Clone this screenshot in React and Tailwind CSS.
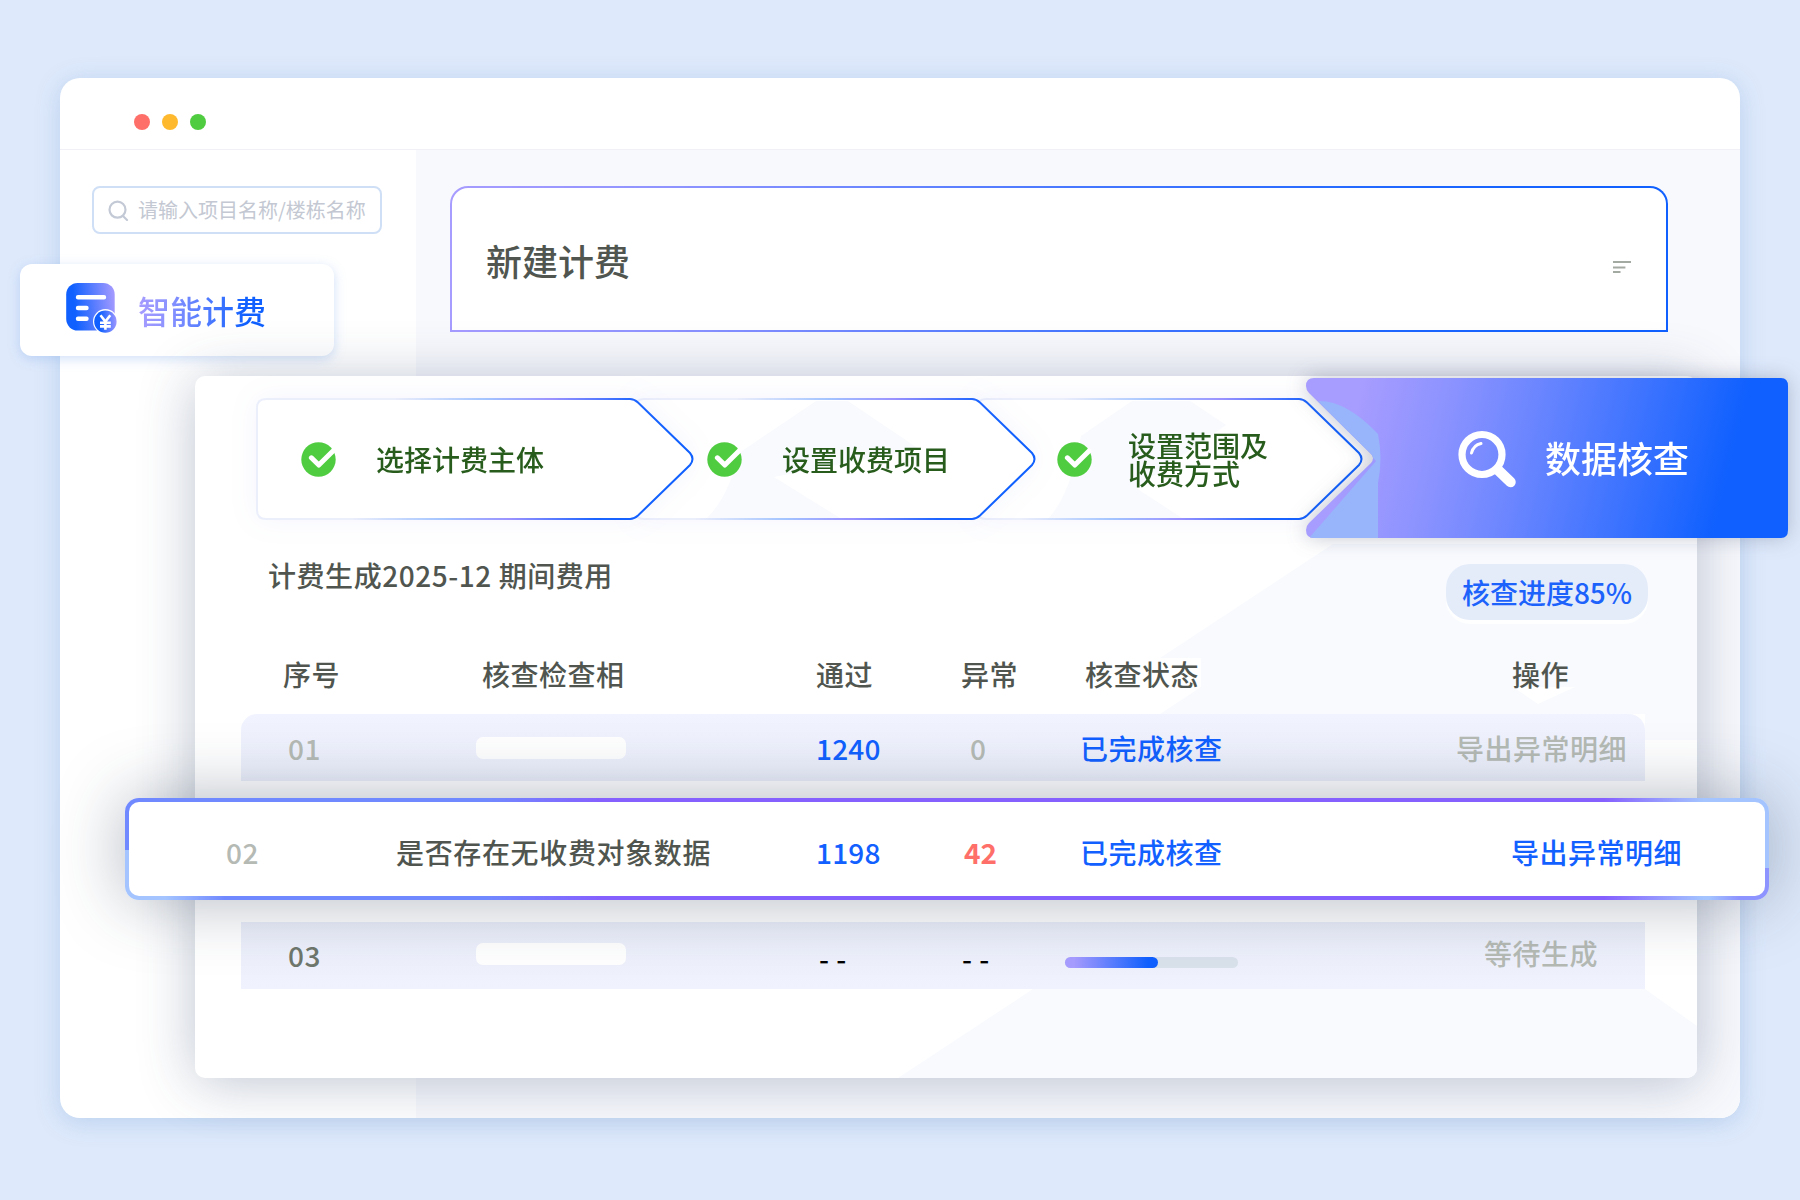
import React from "react";

function Dot({ className }) {
  return <span className={`h-4 w-4 rounded-full ${className}`} />;
}

function CheckBadge() {
  return (
    <svg className="h-[35px] w-[35px] shrink-0" viewBox="0 0 35 35" fill="none">
      <circle cx="17.5" cy="17.5" r="17.2" fill="#50cc41" />
      <path d="M10.4 15.8 17.8 23 32 9" stroke="#fff" strokeWidth="5" strokeLinecap="round" strokeLinejoin="round" />
    </svg>
  );
}

function StepShape({ width, id }) {
  const r = width - 61;
  const d = `M10 1 H${r - 4} Q${r} 1 ${r + 4} 4.5 L${width - 5} 55 Q${width} 61 ${width - 5} 67 L${r + 4} 117.5 Q${r} 121 ${r - 4} 121 H10 Q1 121 1 112 V10 Q1 1 10 1 Z`;
  return (
    <svg className="col-start-1 row-start-1" width={width} height="122" viewBox={`0 0 ${width} 122`} fill="none">
      <defs>
        <linearGradient id={id} gradientUnits="userSpaceOnUse" x1={width - 300} y1="0" x2={width - 30} y2="95">
          <stop offset="0" stopColor="#ebeefb" />
          <stop offset="0.3" stopColor="#a3c4ff" />
          <stop offset="0.52" stopColor="#9a92ff" />
          <stop offset="0.8" stopColor="#1c64ff" />
          <stop offset="1" stopColor="#0f60ff" />
        </linearGradient>
      </defs>
      <path d={d} fill="#fff" stroke={`url(#${id})`} strokeWidth="2" />
    </svg>
  );
}

function Step({ width, id, className, children, tint }) {
  return (
    <div className={`grid h-[122px] shrink-0 drop-shadow-[0_0_14px_rgba(60,90,220,0.06)] ${className}`}>
      <StepShape width={width} id={id} />
      {tint && (
        <svg className="col-start-1 row-start-1" width={width} height="122" viewBox={`0 0 ${width} 122`}>
          <path d={tint} fill="#f9fafe" />
        </svg>
      )}
      <div className="col-start-1 row-start-1 flex items-center">{children}</div>
    </div>
  );
}

function BillIcon() {
  return (
    <svg className="h-[52px] w-[52px]" viewBox="0 0 52 52" fill="none">
      <defs>
        <linearGradient id="bill" x1="0" y1="0.4" x2="1" y2="0.3">
          <stop offset="0.15" stopColor="#0f60ff" />
          <stop offset="1" stopColor="#a49aff" />
        </linearGradient>
        <linearGradient id="coin" x1="0" y1="0" x2="1" y2="0">
          <stop offset="0.25" stopColor="#0f60ff" />
          <stop offset="1" stopColor="#9c96ff" />
        </linearGradient>
      </defs>
      <rect x="0.2" y="0" width="48.5" height="47.5" rx="11.5" fill="url(#bill)" />
      <path d="M12 14.2H38M12 25H20.5M12 35.8H20.5" stroke="#fff" strokeWidth="4.4" strokeLinecap="round" />
      <circle cx="39.4" cy="38.4" r="12.4" fill="#fff" />
      <circle cx="39.4" cy="38.6" r="11.2" fill="url(#coin)" />
      <path d="M34.5 32.3 39.4 38.6 44.3 32.3M39.4 38.6V46.8M34 39.8H44.8M34 43.4H44.8" stroke="#fff" strokeWidth="2.6" />
    </svg>
  );
}

function Window() {
  return (
    <div className="col-start-1 row-start-1 ml-[60px] mt-[78px] flex h-[1040px] w-[1680px] flex-col overflow-hidden rounded-[20px] bg-white shadow-[0_4px_24px_rgba(110,160,215,0.32)]">
      <div className="flex h-[72px] shrink-0 items-center gap-3 border-b border-[#f0f0f6] pl-[74px] pt-[17px]">
        <Dot className="bg-[#ff6f69]" />
        <Dot className="bg-[#ffb92f]" />
        <Dot className="bg-[#50cc41]" />
      </div>
      <div className="flex flex-1">
        <div className="w-[356px] shrink-0 pl-8 pt-9">
          <div className="flex h-12 w-[290px] items-center rounded-lg border-2 border-[#cfdff5] pl-[14px]">
            <svg className="h-[21px] w-[21px] shrink-0" viewBox="0 0 21 21" fill="none" stroke="#c3cad6" strokeWidth="2.2" strokeLinecap="round">
              <circle cx="9.5" cy="9.7" r="8" />
              <path d="M15 16 19 20" />
            </svg>
            <span className="ml-[9px] whitespace-nowrap text-[20px] leading-none text-[#c3c8d2]">请输入项目名称/楼栋名称</span>
          </div>
        </div>
        <div className="flex-1 bg-[#f8f9fd] pl-[34px] pt-9">
          <div className="flex h-[146px] w-[1218px] items-center justify-between rounded-t-[18px] border-2 border-transparent pl-[34px] pr-[35px] [background:linear-gradient(#fff,#fff)_padding-box,linear-gradient(92deg,#a79cff_0%,#8f94ff_18%,#4577ff_52%,#1c66ff_80%,#0f60ff_100%)_border-box]">
            <span className="pt-0.5 text-[36px] font-medium leading-none text-[#50564f]">新建计费</span>
            <svg className="mt-4 h-[14px] w-[18px]" viewBox="0 0 18 14" stroke="#a3aaa2" strokeWidth="2">
              <path d="M0 2H18M0 7.6H12.4M0 12H7.5" />
            </svg>
          </div>
        </div>
      </div>
    </div>
  );
}

function NavCard() {
  return (
    <div className="col-start-1 row-start-1 ml-5 mt-[264px] flex h-[92px] w-[314px] rounded-[12px] bg-white pl-[46px] shadow-[0_3px_12px_rgba(120,165,235,0.35)]">
      <div className="mt-[19px]">
        <BillIcon />
      </div>
      <span className="ml-5 h-[92px] bg-[linear-gradient(90deg,#a79cff_0%,#8d93ff_22%,#2f6eff_70%,#0f60ff_85%)] bg-clip-text text-[32px] font-medium leading-[92px] text-transparent">智能计费</span>
    </div>
  );
}

function Placeholder() {
  return <span className="h-[22px] w-[150px] rounded-[7px] bg-white" />;
}

function Panel() {
  return (
    <div className="z-10 col-start-1 row-start-1 ml-[195px] mt-[376px] grid h-[702px] w-[1502px] rounded-[10px] bg-white shadow-[0_4px_56px_rgba(50,70,110,0.32)]">
      <svg className="col-start-1 row-start-1 rounded-[10px]" width="1502" height="702" viewBox="0 0 1502 702" fill="#f8fafe">
        <path d="M1138 168 1502 168V364H1450V338H965L1006 311V282H965Z" />
        <path d="M703 702 838 613H1450L1502 650V702Z" />
        <path d="M1318 311H1380L1343 328Z" fill="#fff" />
      </svg>
      <div className="col-start-1 row-start-1 flex w-[1502px] flex-col">
        <div className="flex pl-[61px] pt-[22px]">
          <Step width={439} id="s1" className="z-30 w-[439px]">
            <div className="flex items-center pl-[45px]">
              <CheckBadge />
              <span className="-mt-px ml-[40px] text-[28px] font-medium leading-7 text-[#275c1c]">选择计费主体</span>
            </div>
          </Step>
          <Step width={403} id="s2" className="z-20 -ml-[61px] w-[403px]" tint="M73 120Q95 98 105 55L182 3H214L285 51L140 79L206 120Z">
            <div className="flex items-center pl-[73px]">
              <CheckBadge />
              <span className="-mt-px ml-[40px] text-[28px] font-medium leading-7 text-[#275c1c]">设置收费项目</span>
            </div>
          </Step>
          <Step width={388} id="s3" className="z-10 -ml-[61px] w-[388px]" tint="M73 120Q95 95 105 38L156 3H214L250 27L160 90L206 120Z">
            <div className="flex items-center pl-[81px]">
              <CheckBadge />
              <span className="-mt-px ml-[36px] text-[28px] font-medium leading-7 text-[#275c1c]">
                设置范围及
                <br />
                收费方式
              </span>
            </div>
          </Step>
        </div>
        <div className="mt-11 flex h-[56px] items-start justify-between pl-[73px] pr-[49px]">
          <span className="-mt-[3px] text-[28px] font-medium leading-7 tracking-[0.55px] text-[#50564f]">计费生成2025-12 期间费用</span>
          <span className="flex h-14 w-[202px] items-center justify-center rounded-[24px] bg-[#e4ecfa] text-[28px] font-medium leading-none text-[#1c62fb] shadow-[0_4px_1px_#fff]">核查进度85%</span>
        </div>
        <div className="ml-[46px] flex w-[1404px] flex-col text-[28px] font-medium leading-7 tracking-[0.5px] text-[#50564f]">
          <div className="mt-[40px] grid h-7 grid-cols-[199px_334px_145px_124px_427px_auto] pl-[42px]">
            <span>序号</span>
            <span>核查检查相</span>
            <span>通过</span>
            <span>异常</span>
            <span>核查状态</span>
            <span>操作</span>
          </div>
          <div className="mt-[26px] grid h-[67px] grid-cols-[188px_340px_154px_110px_376px_auto] items-center rounded-t-[16px] bg-[linear-gradient(#f1f4fe,#eceffb)] pl-[47px] pt-px">
            <span className="text-[#b5bab4]">01</span>
            <span className="flex">
              <Placeholder />
            </span>
            <span className="tracking-[0.2px] text-[#1160ff]">1240</span>
            <span className="text-[#b5bab4]">0</span>
            <span className="text-[#1160ff]">已完成核查</span>
            <span className="text-[#b5bab4]">导出异常明细</span>
          </div>
          <div className="z-20 -ml-[116px] mt-[17px] grid h-[102px] w-[1644px] grid-cols-[170px_420px_148px_116px_431px_auto] items-center rounded-[14px] border-4 border-transparent pl-[97px] pt-[5px] shadow-[0_0_68px_rgba(40,55,80,0.36)] [background:linear-gradient(#fff,#fff)_padding-box,linear-gradient(90deg,#a3c4ff_40%,transparent)_0_100%/100px_50px_no-repeat_border-box,linear-gradient(270deg,#8d93ff_50%,transparent)_100%_100%/60px_32px_no-repeat_border-box,linear-gradient(90deg,#7189ff_0%,#7189ff_22%,#8560ff_29%,#8560ff_90%,#a3c4ff_96%)_border-box]">
            <span className="text-[#b5bab4]">02</span>
            <span className="tracking-[0.65px]">是否存在无收费对象数据</span>
            <span className="tracking-[0.2px] text-[#1160ff]">1198</span>
            <span className="font-bold tracking-normal text-[#ff6f69]">42</span>
            <span className="text-[#1160ff]">已完成核查</span>
            <span className="text-[#1160ff]">导出异常明细</span>
          </div>
          <div className="mt-[22px] grid h-[67px] grid-cols-[188px_343px_143px_103px_419px_auto] items-center bg-[linear-gradient(#ebeefa,#f0f3fd)] pl-[47px]">
            <span className="-mt-px text-[#6f776c]">03</span>
            <span className="flex pb-[3px]">
              <Placeholder />
            </span>
            <span className="pt-1 text-black">- -</span>
            <span className="pt-1 text-black">- -</span>
            <span className="mt-[13px] flex h-[11px] w-[173px] rounded-full bg-[#d9e1eb]">
              <span className="h-full w-[93px] rounded-full bg-[linear-gradient(90deg,#a79cff_10%,#0f60ff_90%)]" />
            </span>
            <span className="pb-[5px] text-[#b5bab4]">等待生成</span>
          </div>
        </div>
      </div>
    </div>
  );
}

function ReviewRibbon() {
  return (
    <div className="z-20 col-start-1 row-start-1 ml-[1306px] mt-[378px] grid h-40 w-[482px] drop-shadow-[0_0_10px_rgba(60,70,100,0.3)]">
      <svg className="col-start-1 row-start-1" width="482" height="160" viewBox="0 0 482 160">
        <defs>
          <linearGradient id="ribbon" x1="0" y1="0" x2="1" y2="0.08">
            <stop offset="0.12" stopColor="#a79cff" />
            <stop offset="0.3" stopColor="#8c93ff" />
            <stop offset="0.48" stopColor="#6c86ff" />
            <stop offset="0.72" stopColor="#3a72ff" />
            <stop offset="0.92" stopColor="#0f60ff" />
          </linearGradient>
          <clipPath id="ribbonClip">
            <path d="M8 0H475Q482 0 482 8V152Q482 160 475 160H8Q0 160 0 152Q0 148 3 145L65 85Q69 80 65 76L3 15Q0 12 0 8Q0 0 8 0Z" />
          </clipPath>
        </defs>
        <g clipPath="url(#ribbonClip)">
          <rect width="482" height="160" fill="url(#ribbon)" />
          <path d="M12 23Q40 22 72 56Q77 80 72 105V160H3L70 83Z" fill="#98b4fb" />
        </g>
      </svg>
      <div className="col-start-1 row-start-1 flex items-center">
        <svg className="ml-[151px] h-[60px] w-[60px]" viewBox="0 0 60 60" fill="none" stroke="#fff" strokeLinecap="round">
          <circle cx="25" cy="26.5" r="20" strokeWidth="7.2" />
          <path d="M41 42 53.5 54" strokeWidth="10.5" />
          <path d="M14.5 25Q16.5 17 24 15.5" strokeWidth="3" />
        </svg>
        <span className="-mt-0.5 ml-[28px] text-[36px] font-medium leading-none text-white">数据核查</span>
      </div>
    </div>
  );
}

export default function App() {
  return (
    <div className="grid h-[1200px] w-[1800px] grid-cols-[1800px] grid-rows-[1200px] items-start justify-items-start overflow-hidden bg-[#dee9fb] font-['Noto_Sans_CJK_SC',sans-serif]">
      <Window />
      <Panel />
      <ReviewRibbon />
      <NavCard />
    </div>
  );
}
